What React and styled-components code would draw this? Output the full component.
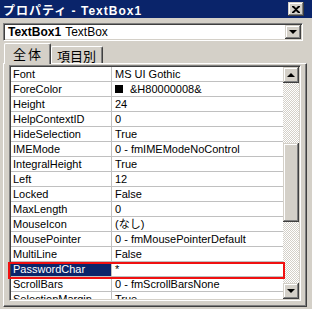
import React from "react";
import styled, { createGlobalStyle } from "styled-components";

const GlobalStyle = createGlobalStyle`
  html, body {
    margin: 0;
    padding: 0;
    background: #d4d0c8;
    overflow: hidden;
  }
  body {
    font-family: "Liberation Sans", "Noto Sans CJK JP", sans-serif;
    font-size: 11px;
    color: #000;
  }
`;

const raised = `
  box-shadow: inset -1px -1px #404040, inset 1px 1px #d4d0c8,
    inset -2px -2px #808080, inset 2px 2px #ffffff;
`;

const Window = styled.div`
  width: 312px;
  height: 309px;
  background: #d4d0c8;
  display: flex;
  flex-direction: column;
`;

const TitleBar = styled.div`
  height: 18px;
  background: #0a246a;
  display: flex;
  align-items: center;
  justify-content: space-between;
  padding: 0 8px 0 3px;
  box-sizing: border-box;
`;

const Title = styled.span`
  color: #fff;
  font-weight: bold;
  font-size: 12px;
  letter-spacing: 1px;
`;

const CloseButton = styled.div`
  width: 16px;
  height: 14px;
  background: #d4d0c8;
  ${raised}
  display: flex;
  align-items: center;
  justify-content: center;
`;

const Body = styled.div`
  padding: 5px 0 0 3px;
  display: flex;
  flex-direction: column;
`;

const Combo = styled.div`
  width: 300px;
  height: 18px;
  box-sizing: border-box;
  border-top: 1px solid #808080;
  border-left: 1px solid #808080;
  border-right: 1px solid #fff;
  border-bottom: 1px solid #fff;
  box-shadow: inset 1px 1px #404040, inset -1px -1px #d4d0c8;
  background: #fff;
  display: flex;
  align-items: center;
  padding: 1px;
`;

const ComboText = styled.div`
  flex: 1;
  padding-left: 3px;
  font-size: 12px;
  white-space: nowrap;
  b {
    font-weight: bold;
    margin-right: 4px;
  }
`;

const DropButton = styled.div`
  width: 16px;
  height: 14px;
  background: #d4d0c8;
  ${raised}
  display: flex;
  align-items: center;
  justify-content: center;
`;

const Arrow = styled.span`
  width: 0;
  height: 0;
  border-left: 4px solid transparent;
  border-right: 4px solid transparent;
  ${(p) =>
    p.$up ? "border-bottom: 4px solid #000;" : "border-top: 4px solid #000;"}
`;

const Tabs = styled.div`
  display: flex;
  align-items: flex-end;
  margin-top: 2px;
  padding-left: 1px;
  height: 21px;
  position: relative;
  z-index: 2;
  margin-bottom: -1px;
`;

const Tab = styled.div`
  box-sizing: border-box;
  height: ${(p) => (p.$active ? "21px" : "17px")};
  margin-bottom: ${(p) => (p.$active ? "0" : "1px")};
  padding: ${(p) => (p.$active ? "1px 7px 0 8px" : "0 6px 0 5px")};
  background: #d4d0c8;
  border-top: 1px solid #fff;
  border-left: 1px solid #fff;
  border-right: 1px solid #404040;
  border-radius: 2px 2px 0 0;
  box-shadow: inset -1px 0 #808080;
  font-family: "Noto Sans CJK JP", sans-serif;
  font-size: 13px;
  line-height: 17px;
  letter-spacing: ${(p) => (p.$active ? "2px" : "0")};
`;

const Panel = styled.div`
  width: 304px;
  height: 244px;
  box-sizing: border-box;
  border-top: 1px solid #fff;
  border-left: 1px solid #fff;
  border-right: 1px solid #404040;
  border-bottom: 1px solid #404040;
  box-shadow: inset -1px -1px #808080;
  padding: 1px 4px 4px 5px;
`;

const Grid = styled.div`
  width: 292px;
  height: 236px;
  box-sizing: border-box;
  border-top: 1px solid #808080;
  border-left: 1px solid #808080;
  border-right: 1px solid #fff;
  border-bottom: 1px solid #fff;
  box-shadow: inset 1px 1px #404040, inset -1px -1px #d4d0c8;
  padding: 1px;
  display: flex;
`;

const Rows = styled.div`
  width: 272px;
  height: 232px;
  background: #fff;
  overflow-x: visible;
  overflow-y: clip;
`;

const Row = styled.div`
  position: relative;
  display: flex;
  height: 15px;
  box-sizing: border-box;
  border-bottom: 1px solid #c0c0c0;
  line-height: 14px;
`;

const NameCell = styled.div`
  width: 101px;
  box-sizing: border-box;
  border-right: 1px solid #c0c0c0;
  padding-left: 2px;
  white-space: nowrap;
  overflow: hidden;
  background: ${(p) => (p.$selected ? "#0a246a" : "transparent")};
  color: ${(p) => (p.$selected ? "#fff" : "#000")};
`;

const ValueCell = styled.div`
  flex: 1;
  padding-left: 3px;
  white-space: nowrap;
  overflow: hidden;
  display: flex;
  align-items: center;
`;

const Swatch = styled.span`
  width: 8px;
  height: 8px;
  background: #000;
  margin: 0 7px 0 0;
`;

const RedMark = styled.div`
  position: absolute;
  left: -3px;
  top: 0;
  width: 277px;
  height: 17px;
  box-sizing: border-box;
  border: 2px solid #f01010;
  pointer-events: none;
  z-index: 3;
`;

const ScrollBar = styled.div`
  width: 16px;
  height: 232px;
  display: flex;
  flex-direction: column;
`;

const ScrollButton = styled.div`
  width: 16px;
  height: 16px;
  flex: none;
  background: #d4d0c8;
  ${raised}
  display: flex;
  align-items: center;
  justify-content: center;
`;

const Track = styled.div`
  flex: ${(p) => p.$grow};
  background: conic-gradient(#d4d0c8 25%, #fff 0 50%, #d4d0c8 0 75%, #fff 0) 0 0 / 2px 2px;
`;

const Thumb = styled.div`
  height: 79px;
  flex: none;
  background: #d4d0c8;
  ${raised}
`;

const properties = [
  ["Font", "MS UI Gothic"],
  ["ForeColor", "&H80000008&", true],
  ["Height", "24"],
  ["HelpContextID", "0"],
  ["HideSelection", "True"],
  ["IMEMode", "0 - fmIMEModeNoControl"],
  ["IntegralHeight", "True"],
  ["Left", "12"],
  ["Locked", "False"],
  ["MaxLength", "0"],
  ["MouseIcon", "(なし)"],
  ["MousePointer", "0 - fmMousePointerDefault"],
  ["MultiLine", "False"],
  ["PasswordChar", "*"],
  ["ScrollBars", "0 - fmScrollBarsNone"],
  ["SelectionMargin", "True"],
];

export default function App() {
  return (
    <>
      <GlobalStyle />
      <Window>
        <TitleBar>
          <Title>プロパティ - TextBox1</Title>
          <CloseButton>
            <svg width="8" height="7" viewBox="0 0 8 7">
              <path d="M0 0h2l2 2 2-2h2v1L5 3.5 8 6v1H6L4 5 2 7H0V6l3-2.5L0 1z" fill="#000" />
            </svg>
          </CloseButton>
        </TitleBar>
        <Body>
          <Combo>
            <ComboText>
              <b>TextBox1</b>TextBox
            </ComboText>
            <DropButton>
              <Arrow />
            </DropButton>
          </Combo>
          <Tabs>
            <Tab $active>全体</Tab>
            <Tab>項目別</Tab>
          </Tabs>
          <Panel>
            <Grid>
              <Rows>
                {properties.map(([name, value, swatch]) => {
                  const selected = name === "PasswordChar";
                  return (
                    <Row key={name}>
                      <NameCell $selected={selected}>{name}</NameCell>
                      <ValueCell>
                        {swatch && <Swatch />}
                        {value}
                      </ValueCell>
                      {selected && <RedMark />}
                    </Row>
                  );
                })}
              </Rows>
              <ScrollBar>
                <ScrollButton>
                  <Arrow $up />
                </ScrollButton>
                <Track $grow={60} />
                <Thumb />
                <Track $grow={61} />
                <ScrollButton>
                  <Arrow />
                </ScrollButton>
              </ScrollBar>
            </Grid>
          </Panel>
        </Body>
      </Window>
    </>
  );
}
